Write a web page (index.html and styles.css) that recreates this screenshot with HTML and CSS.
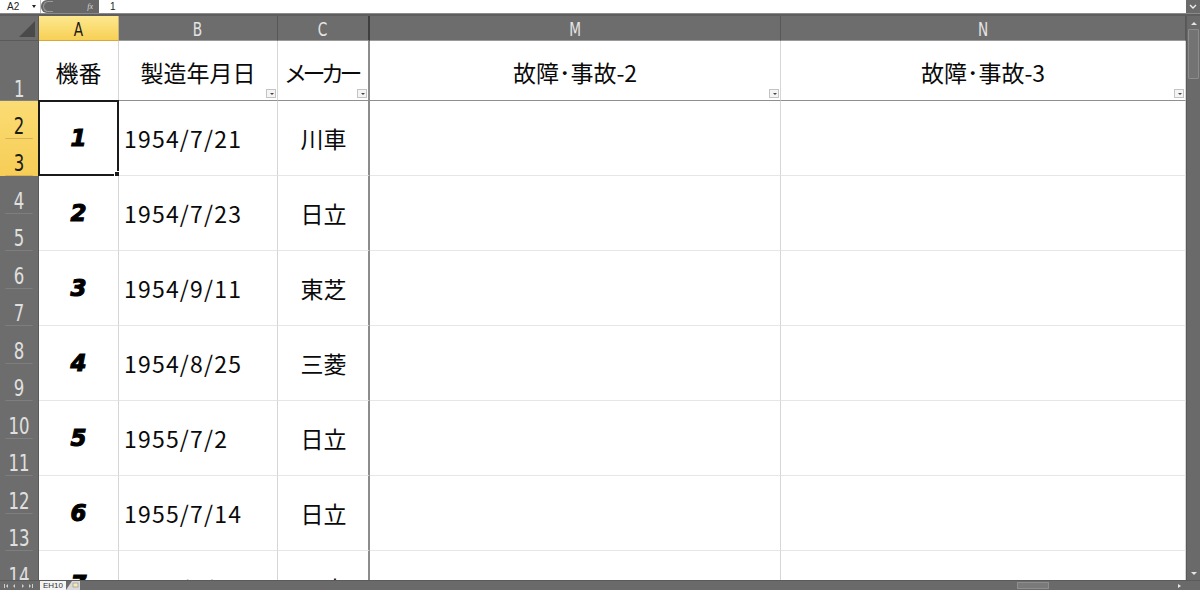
FILE: index.html
```html
<!DOCTYPE html>
<html lang="ja">
<head>
<meta charset="utf-8">
<title>EH10</title>
<link rel="stylesheet" href="styles.css">
</head>
<body>
<div class="app">
  <div class="fbar">
    <div class="namebox"><span>A2</span><span class="nb-arrow"></span></div>
    <div class="fbtns"><span class="fb-ring"></span><span class="fx">fx</span></div>
    <div class="finput">1</div>
    <div class="fexpand"><svg width="8" height="6" viewBox="0 0 8 6"><path d="M1 1 L4 4 L7 1" fill="none" stroke="#eee" stroke-width="1.4"/></svg></div>
  </div>
  <div class="strip"></div>
  <div class="main">
    <div class="sheet">
      <div class="corner"><svg width="38" height="24" viewBox="0 0 38 24"><path d="M35 5 L35 21 L19 21 Z" fill="#4a4a4a"/></svg></div>
      <div class="ch active"><span>A</span></div>
      <div class="ch"><span>B</span></div>
      <div class="ch hid"><span>C</span></div>
      <div class="ch"><span>M</span></div>
      <div class="ch"><span>N</span></div>

      <div class="rh r1"><span>1</span></div>
      <div class="c h1 cA">機番</div>
      <div class="c h1 cB">製造年月日<span class="flt"></span></div>
      <div class="c h1 cC prop">メーカー<span class="flt"></span></div>
      <div class="c h1 cM">故障･事故-2<span class="flt"></span></div>
      <div class="c h1 cN">故障･事故-3<span class="flt"></span></div>

      <div class="rh2 sel"><span>2</span><span>3</span></div>
      <div class="c num cA"><span>1</span><div class="selbox"></div></div>
      <div class="c date cB">1954/7/21</div>
      <div class="c jp cC">川車</div>
      <div class="c cM"></div>
      <div class="c cN"></div>

      <div class="rh2"><span>4</span><span>5</span></div>
      <div class="c num cA"><span>2</span></div>
      <div class="c date cB">1954/7/23</div>
      <div class="c jp cC">日立</div>
      <div class="c cM"></div>
      <div class="c cN"></div>

      <div class="rh2"><span>6</span><span>7</span></div>
      <div class="c num cA"><span>3</span></div>
      <div class="c date cB">1954/9/11</div>
      <div class="c jp cC">東芝</div>
      <div class="c cM"></div>
      <div class="c cN"></div>

      <div class="rh2"><span>8</span><span>9</span></div>
      <div class="c num cA"><span>4</span></div>
      <div class="c date cB">1954/8/25</div>
      <div class="c jp cC">三菱</div>
      <div class="c cM"></div>
      <div class="c cN"></div>

      <div class="rh2"><span>10</span><span>11</span></div>
      <div class="c num cA"><span>5</span></div>
      <div class="c date cB">1955/7/2</div>
      <div class="c jp cC">日立</div>
      <div class="c cM"></div>
      <div class="c cN"></div>

      <div class="rh2"><span>12</span><span>13</span></div>
      <div class="c num cA"><span>6</span></div>
      <div class="c date cB">1955/7/14</div>
      <div class="c jp cC">日立</div>
      <div class="c cM"></div>
      <div class="c cN"></div>

      <div class="rh2"><span>14</span><span>15</span></div>
      <div class="c num cA last"><span>7</span></div>
      <div class="c date cB last">1955/8/12</div>
      <div class="c jp cC last">日立</div>
      <div class="c cM"></div>
      <div class="c cN"></div>
    </div>
    <div class="vscroll">
      <div class="vs-arrow up"></div>
      <div class="vs-thumb"></div>
      <div class="vs-track"></div>
      <div class="vs-arrow down"></div>
    </div>
  </div>
  <div class="bottom">
    <div class="tabnav"><svg width="38" height="9" viewBox="0 0 38 9"><g fill="#cfcfcf"><rect x="4" y="3" width="1" height="4"/><path d="M8 3 L6 5 L8 7 Z"/><path d="M15 3 L13 5 L15 7 Z"/><path d="M22 3 L24 5 L22 7 Z"/><path d="M29 3 L31 5 L29 7 Z"/><rect x="32" y="3" width="1" height="4"/></g></svg></div>
    <div class="tab">EH10</div>
    <div class="newtab"><svg width="16" height="10" viewBox="0 0 16 10"><path d="M0 10 L6 1 L14 1 L14 10 Z" fill="#d9d9d9"/><rect x="7" y="3" width="5" height="4" fill="#f5e9b8" stroke="#8a8a8a" stroke-width="0.6"/></svg></div>
    <div class="hspace"></div>
    <div class="hthumb"></div>
    <div class="htrack"></div>
    <div class="harrow"><svg width="6" height="6" viewBox="0 0 6 6"><path d="M1 1 L4 3 L1 5 Z" fill="#e6e6e6"/></svg></div>
    <div class="hcorner"></div>
  </div>
</div>
</body>
</html>
```

FILE: styles.css
```css
* { box-sizing: border-box; }
html, body { margin: 0; padding: 0; }
body {
  width: 1200px;
  height: 590px;
  overflow: hidden;
  background: #6a6a6a;
  font-family: "Noto Sans CJK JP", "Noto Sans", sans-serif;
}
.app { width: 1200px; height: 590px; display: flex; flex-direction: column; }

/* formula bar */
.fbar { height: 13px; display: flex; background: #fff; }
.namebox {
  width: 41px; display: flex; align-items: center; justify-content: space-between;
  padding: 0 4px 0 7px; font-family: "Liberation Sans", sans-serif; font-size: 10px; color: #222;
  border-right: 1px solid #bbb;
}
.nb-arrow { width: 0; height: 0; border-left: 2.5px solid transparent; border-right: 2.5px solid transparent; border-top: 3px solid #222; }
.fbtns {
  width: 58px; background: #676767; display: flex; align-items: center; justify-content: space-between;
  padding: 0 6px 0 2px; border-radius: 6px 0 0 6px;
}
.fb-ring { width: 10px; height: 11px; border: 1px solid #9a9a9a; border-right: none; border-radius: 6px 0 0 6px; }
.fx { font-family: "Liberation Serif", serif; font-style: italic; font-size: 8px; color: #ddd; }
.finput { flex: 1; font-family: "Liberation Sans", sans-serif; font-size: 10px; line-height: 13px; padding-left: 11px; color: #222; }
.fexpand { width: 14px; background: #6a6a6a; display: flex; align-items: center; justify-content: center; }

.strip { height: 3px; background: #5e5e5e; border-top: 1px solid #8a8a8a; }

.main { height: 564px; display: flex; }
.sheet {
  width: 1186px; height: 564px; overflow: hidden; background: #fff;
  display: grid;
  grid-template-columns: 39px 80px 159px 92px 411px 405px;
  grid-template-rows: 25px 60px repeat(7, 75px);
}

/* column headers */
.corner { background: #6d6d6d; border-right: 1px solid #5a5a5a; border-bottom: 1px solid #5a5a5a; }
.corner svg { display: block; }
.ch {
  background: #6d6d6d; color: #e4e4e4;
  border-right: 1px solid #585858; border-bottom: 1px solid #9a9a9a;
  display: flex; align-items: center; justify-content: center;
  font-family: "DejaVu Sans", sans-serif;
  font-size: 19px; line-height: 20px; padding-top: 1px;
}
.ch span { display: inline-block; transform: scaleX(0.72); }
.ch.active { background: linear-gradient(#fde88f, #f7d055); color: #1a1a1a; border-bottom-color: #d9a83a; border-right-color: #c9b37a; }
.ch.hid { border-right: 2px solid #3e3e3e; }

/* row headers */
.rh, .rh2 {
  background: #6d6d6d; color: #e0e0e0;
  border-right: 1px solid #5a5a5a;
  font-family: "DejaVu Sans", sans-serif;
  font-size: 23px;
}
.rh { display: flex; align-items: flex-end; justify-content: center; border-bottom: 1px solid #808080; line-height: 22px; }
.rh span { display: inline-block; transform: scaleX(0.72); }
.rh2 { display: flex; flex-direction: column; }
.rh2 span {
  flex: 1; display: flex; align-items: flex-end; justify-content: center;
  border-bottom: 1px solid #7e7e7e; line-height: 22px; padding-bottom: 1px;
  transform: scaleX(0.72);
}
.rh2.sel { background: linear-gradient(#fbdc74, #f6cd56); color: #1a1a1a; }
.rh2.sel span { border-bottom-color: #d8b256; }

/* cells */
.c {
  position: relative;
  border-right: 1px solid #d6d6d6; border-bottom: 1px solid #e6e6e6;
  display: flex; align-items: center; justify-content: center;
  font-size: 23px; color: #0a0a0a; white-space: nowrap;
}
.cC { border-right: 2px solid #8c8c8c; }
.h1 { border-bottom: 1px solid #8f8f8f; padding-top: 2px; }
.prop { letter-spacing: -4.5px; padding-right: 4px; }
.num span {
  font-family: "DejaVu Sans", sans-serif; font-weight: bold; font-style: italic;
  font-size: 23px; color: #000; -webkit-text-stroke: 1.1px #000;
}
.date { justify-content: flex-start; padding-left: 5px; letter-spacing: 1.2px; }
.jp { padding-left: 1px; }
.last { align-items: flex-start; padding-top: 20px; }

.flt {
  position: absolute; right: 1px; bottom: 2px; width: 10px; height: 9px;
  background: #f4f4f4; border: 1px solid #c4c4c4; letter-spacing: 0;
}
.flt::after {
  content: ""; position: absolute; left: 2.5px; top: 2.5px; width: 0; height: 0;
  border-left: 2px solid transparent; border-right: 2px solid transparent; border-top: 2px solid #444;
}
.selbox {
  position: absolute; left: -1px; top: -1px; right: -1px; bottom: -1px;
  border: 2px solid #1a1a1a;
}
.selbox::after {
  content: ""; position: absolute; right: -3px; bottom: -3px; width: 4px; height: 4px;
  background: #1a1a1a; border: 1px solid #fff;
}

/* vertical scrollbar */
.vscroll { width: 14px; background: #6a6a6a; display: flex; flex-direction: column; align-items: center; border-left: 1px solid #5a5a5a; }
.vs-arrow { width: 0; height: 0; border-left: 3px solid transparent; border-right: 3px solid transparent; }
.vs-arrow.up { border-bottom: 3px solid #e6e6e6; margin-top: 6px; }
.vs-arrow.down { border-top: 3px solid #e6e6e6; margin-bottom: 5px; }
.vs-thumb { width: 11px; height: 50px; margin-top: 4px; border: 1px solid #8c8c8c; background: #737373; border-radius: 1px; }
.vs-track { flex: 1; }

/* bottom bar */
.bottom { height: 10px; display: flex; background: #6a6a6a; align-items: stretch; border-top: 1px solid #5a5a5a; }
.tabnav { width: 40px; display: flex; align-items: center; }
.tabnav svg { display: block; }
.tab { width: 26px; background: #f4f4f4; color: #333; font-family: "Liberation Sans", sans-serif; font-size: 8px; line-height: 9px; padding-left: 3px; }
.newtab { width: 18px; display: flex; align-items: flex-end; }
.newtab svg { display: block; }
.hspace { width: 933px; }
.hthumb { width: 32px; margin: 1px 0; background: #7a7a7a; border: 1px solid #8e8e8e; }
.htrack { flex: 1; }
.harrow { width: 12px; display: flex; align-items: center; justify-content: center; }
.hcorner { width: 14px; }
```
